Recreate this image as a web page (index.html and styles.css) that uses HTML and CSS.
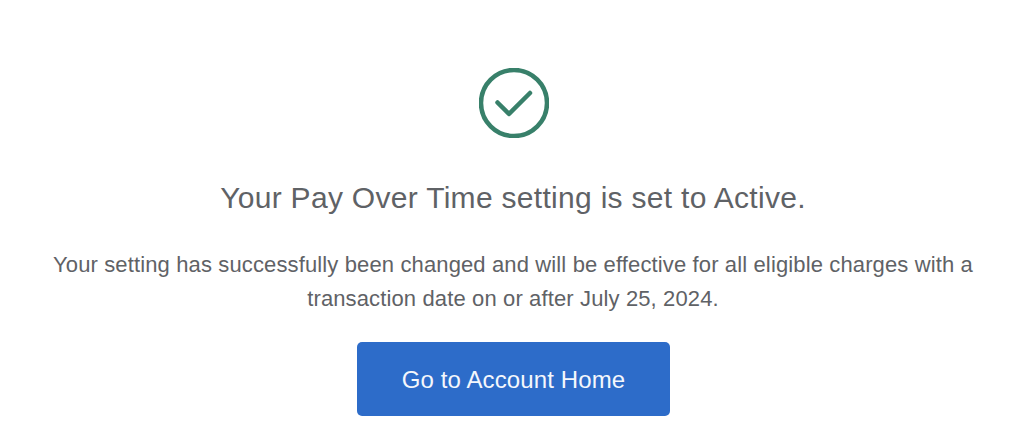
FILE: index.html
```html
<!DOCTYPE html>
<html>
<head>
    <title>Pay Over Time</title>
    <link rel="stylesheet" href="styles.css">
</head>
<body>
    <div class="container">
        <svg class="check-icon" width="70" height="70" viewBox="0 0 70 70">
            <circle cx="35" cy="35" r="33" fill="none" stroke="#38806a" stroke-width="4.5"/>
            <path d="M18.5 34.5 L30 46 L51 25" fill="none" stroke="#38806a" stroke-width="4.5" stroke-linecap="round" stroke-linejoin="round"/>
        </svg>
        <h2 class="title">Your Pay Over Time setting is set to Active.</h2>
        <p class="message">Your setting has successfully been changed and will be effective for all eligible charges with a transaction date on or after July 25, 2024.</p>
        <button type="button" class="home-btn">Go to Account Home</button>
    </div>
</body>
</html>
```

FILE: styles.css
```css
body {
    margin: 0;
    background-color: #fff;
    font-family: "Liberation Sans", Arial, sans-serif;
}

.container {
    display: flex;
    flex-direction: column;
    align-items: center;
    padding: 68px 0 0 2px;
    text-align: center;
}

.check-icon {
    margin-left: 2px;
}

.title {
    margin: 42px 0 0;
    font-size: 30px;
    font-weight: normal;
    line-height: 36px;
    letter-spacing: 0.3px;
    color: #5f6266;
}

.message {
    width: 940px;
    margin: 32px 0 0;
    font-size: 22px;
    line-height: 34px;
    letter-spacing: 0.13px;
    color: #5f6266;
}

.home-btn {
    width: 313px;
    height: 74px;
    margin: 26px 0 0 1px;
    padding: 2px 0 0;
    background-color: #2d6cc9;
    color: #f4f7fc;
    font-family: inherit;
    font-size: 24px;
    letter-spacing: 0.12px;
    border: none;
    border-radius: 5px;
}
```
